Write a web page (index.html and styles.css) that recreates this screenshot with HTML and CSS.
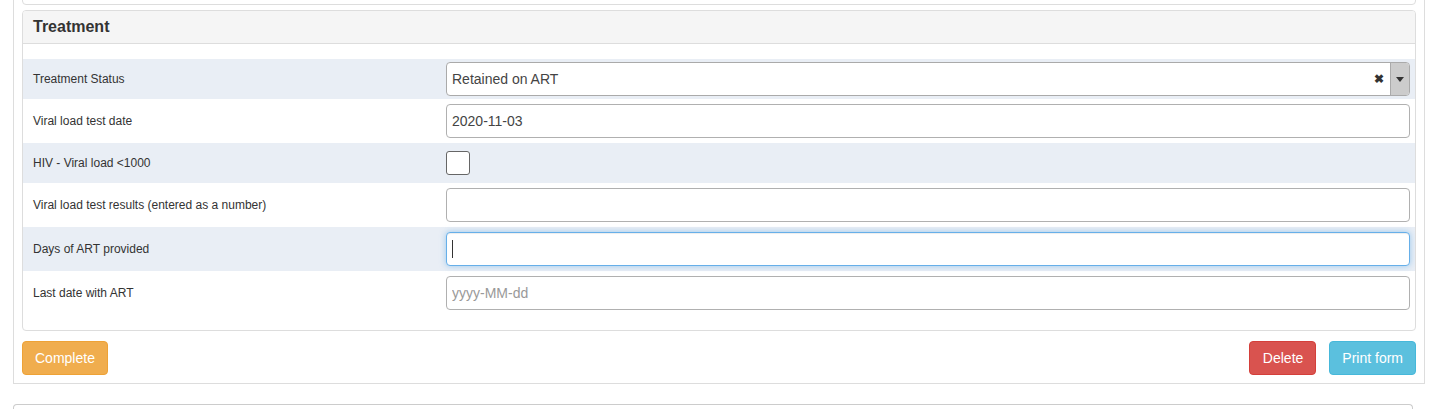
FILE: index.html
```html
<!DOCTYPE html>
<html>
<head>
<meta charset="utf-8">
<link rel="stylesheet" href="styles.css">
</head>
<body>
<div class="outer">
  <div class="prev-panel"></div>
  <div class="panel">
    <div class="panel-heading">Treatment</div>
    <div class="panel-body">
      <div class="row shaded h40">
        <label class="lbl">Treatment Status</label>
        <div class="select">
          <span class="select-text">Retained on ART</span>
          <span class="select-clear">&#x2716;</span>
          <span class="select-arrow"><span class="tri"></span></span>
        </div>
      </div>
      <div class="row h44">
        <label class="lbl">Viral load test date</label>
        <input class="input" type="text" value="2020-11-03">
      </div>
      <div class="row shaded h40">
        <label class="lbl">HIV - Viral load &lt;1000</label>
        <input class="check" type="checkbox">
      </div>
      <div class="row h44">
        <label class="lbl">Viral load test results (entered as a number)</label>
        <input class="input" type="text" value="">
      </div>
      <div class="row shaded h44">
        <label class="lbl">Days of ART provided</label>
        <div class="input focused"><span class="caret"></span></div>
      </div>
      <div class="row h44">
        <label class="lbl">Last date with ART</label>
        <input class="input" type="text" placeholder="yyyy-MM-dd">
      </div>
    </div>
  </div>
  <div class="actions">
    <button class="btn btn-warning">Complete</button>
    <div class="actions-right">
      <button class="btn btn-danger">Delete</button>
      <button class="btn btn-info">Print form</button>
    </div>
  </div>
</div>
<div class="next-panel"></div>
</body>
</html>
```

FILE: styles.css
```css
html, body {
  margin: 0;
  padding: 0;
  background: #fff;
  font-family: "Liberation Sans", Arial, sans-serif;
  color: #333;
  overflow: hidden;
}

.outer {
  box-sizing: border-box;
  width: 1412px;
  margin: -30px 0 0 13px;
  padding: 8px;
  border: 1px solid #ddd;
}

.prev-panel {
  box-sizing: border-box;
  height: 26px;
  margin-bottom: 5px;
  border: 1px solid #ddd;
  border-radius: 4px;
}

.panel {
  border: 1px solid #ddd;
  border-radius: 4px;
  overflow: hidden;
}

.panel-heading {
  box-sizing: border-box;
  height: 33px;
  line-height: 31px;
  padding: 0 10px;
  background: #f5f5f5;
  border-bottom: 1px solid #ddd;
  font-size: 16px;
  font-weight: bold;
  color: #333;
}

.panel-body {
  padding: 15px 0;
}

.row {
  display: grid;
  grid-template-columns: 413px 1fr;
  align-items: center;
  padding: 0 5px 0 10px;
}

.h40 { height: 40px; }
.h44 { height: 44px; }

.shaded { background: #e9eef5; }

.lbl {
  font-size: 12px;
  color: #333;
}

.select {
  box-sizing: border-box;
  height: 34px;
  display: flex;
  align-items: center;
  border: 1px solid #aaa;
  border-radius: 4px;
  background: #fff;
  overflow: hidden;
}

.select-text {
  flex: 1;
  padding-left: 5px;
  font-size: 14px;
  color: #444;
}

.select-clear {
  font-size: 12px;
  font-weight: bold;
  color: #333;
  margin-right: 6px;
}

.select-arrow {
  align-self: stretch;
  width: 18px;
  background: #ccc;
  border-left: 1px solid #aaa;
  display: flex;
  align-items: center;
  justify-content: center;
}

.tri {
  width: 0;
  height: 0;
  border-left: 4px solid transparent;
  border-right: 4px solid transparent;
  border-top: 5px solid #333;
}

.input {
  box-sizing: border-box;
  width: 100%;
  height: 34px;
  margin: 0;
  padding: 0 5px;
  border: 1px solid #b0b0b0;
  border-radius: 4px;
  background: #fff;
  font-family: "Liberation Sans", Arial, sans-serif;
  font-size: 14px;
  color: #444;
  outline: none;
}

.input::placeholder {
  color: #999;
}

.focused {
  border-color: #66afe9;
  box-shadow: inset 0 1px 1px rgba(0,0,0,.075), 0 0 6px rgba(102,175,233,.6);
  display: flex;
  align-items: center;
}

.caret {
  display: block;
  width: 1px;
  height: 18px;
  background: #333;
}

.check {
  -webkit-appearance: none;
  appearance: none;
  box-sizing: border-box;
  width: 24px;
  height: 24px;
  margin: 0;
  border: 1px solid #666;
  border-radius: 3px;
  background: #fff;
}

.actions {
  display: flex;
  justify-content: space-between;
  margin-top: 10px;
}

.actions-right {
  display: flex;
  gap: 13px;
}

.btn {
  box-sizing: border-box;
  height: 34px;
  padding: 0 12px;
  border: 1px solid transparent;
  border-radius: 4px;
  font-family: "Liberation Sans", Arial, sans-serif;
  font-size: 14px;
  color: #fff;
  cursor: pointer;
}

.btn-warning { background: #f0ad4e; border-color: #eea236; }
.btn-danger { background: #d9534f; border-color: #d43f3a; padding: 0 12px 0 13px; }
.btn-info { background: #5bc0de; border-color: #46b8da; }

.next-panel {
  box-sizing: border-box;
  width: 1400px;
  height: 5px;
  margin: 20px 0 0 13px;
  border: 1px solid #ccc;
  border-bottom: none;
  border-radius: 4px 4px 0 0;
}
```
